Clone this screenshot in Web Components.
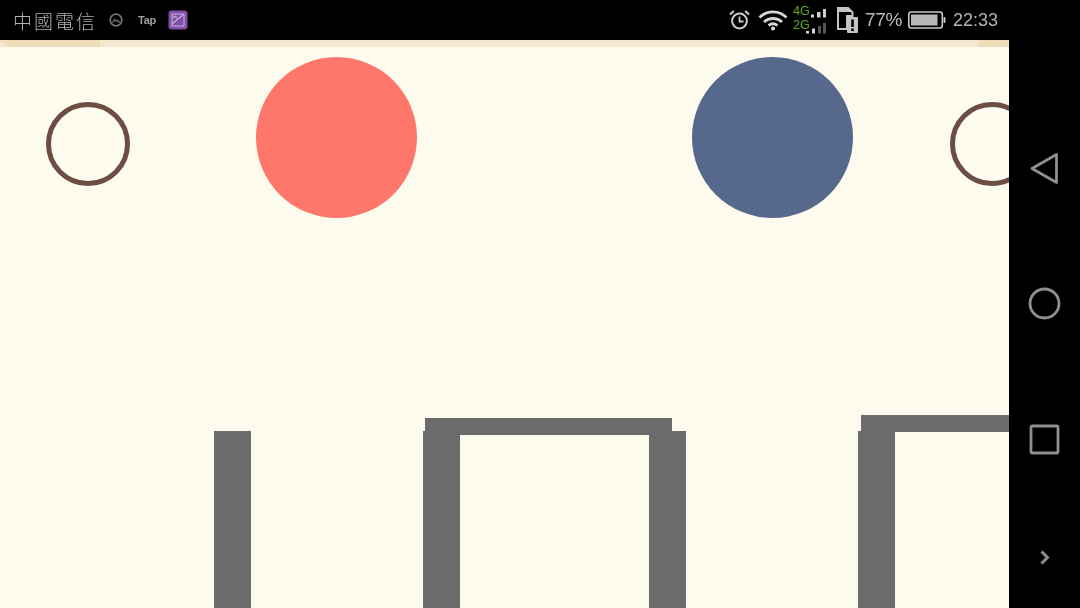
<!DOCTYPE html>
<html><head><meta charset="utf-8"><style>
html,body{margin:0;padding:0;background:#000;overflow:hidden}
body{width:1080px;height:608px}
</style></head><body>
<phone-screen>
  <status-bar slot="status"></status-bar>
  <game-canvas slot="game"></game-canvas>
  <nav-bar slot="nav"></nav-bar>
</phone-screen>
<script>
function def(name, css, html){
  customElements.define(name, class extends HTMLElement{
    constructor(){super();this.attachShadow({mode:'open'}).innerHTML='<style>'+css+'</style>'+html;}
  });
}
def('phone-screen',`
:host{display:grid;grid-template-columns:1009px 71px;grid-template-rows:40px 568px;width:1080px;height:608px;background:#000}
::slotted([slot=status]){grid-column:1;grid-row:1}
::slotted([slot=game]){grid-column:1;grid-row:2}
::slotted([slot=nav]){grid-column:2;grid-row:1 / 3}
`,`<slot name="status"></slot><slot name="game"></slot><slot name="nav"></slot>`);

def('status-bar',`
:host{display:flex;align-items:center;justify-content:space-between;height:40px;background:#000;color:#c8c8c8;font-family:"Liberation Sans",sans-serif;padding:0 10px 0 13px;box-sizing:border-box}
.l,.r{display:flex;align-items:center;flex:none}
.l>*,.r>*{flex:none}
.carrier{font:300 19px/40px "Noto Sans CJK TC","Noto Sans CJK SC",sans-serif;letter-spacing:2px;color:#b4b4b4;width:96px;margin-top:1px;opacity:.99}
.tap{font:700 11px/1 "Liberation Sans",sans-serif;color:#a0a0a0;width:20px;text-align:center;margin:0 11px 0 13px;letter-spacing:-.3px;filter:blur(.5px)}
.pct{font-size:19px;color:#bdbdbd;margin-left:5px;width:37px;letter-spacing:-.3px;white-space:nowrap;opacity:.99}
.time{font-size:18px;color:#b8b8b8;margin-left:7px;width:46px;white-space:nowrap;opacity:.99}
svg{display:block}
`,`
<div class="l">
  <span class="carrier">中國電信</span>
  <svg width="16" height="16" viewBox="0 0 16 16" style="margin-left:-1px" fill="none" stroke="#6e6e6e"><circle cx="8" cy="8" r="5.800" stroke-width="1.800"/><path d="M4.500 10.500 7 7.500 9 9.500 10 8.500l2 2" stroke-width="1.200"/></svg>
  <span class="tap">Tap</span>
  <svg width="20" height="20" viewBox="0 0 20 20"><rect x=".500" y=".500" width="19" height="19" rx="3" fill="#7e4fa8"/><rect x="4" y="4" width="12" height="12" fill="none" stroke="#c9b3da" stroke-width="1"/><path d="M4 14 15.500 4.500M5 8l2-2 2 2" fill="none" stroke="#c9b3da" stroke-width="1.200"/></svg>
</div>
<div class="r">
  <svg width="22" height="22" viewBox="0 0 22 22" fill="none" stroke="#cacaca"><circle cx="11.500" cy="12" r="7.400" stroke-width="2"/><path d="M11.500 7.500V12.500H15.500" stroke-width="1.800"/><path d="M2 5.500 5.800 2M21 5.500 17.200 2" stroke-width="2.200"/></svg>
  <svg style="margin-left:8px" width="30" height="22" viewBox="0 0 30 22" fill="none" stroke="#d6d6d6" stroke-width="2.800"><path d="M1.500 8.500C9 1 21 1 28.500 8.500"/><path d="M6 13c5-4.700 13-4.700 18 0"/><path d="M10.500 16.500c2.800-2.200 6.200-2.200 9 0"/><circle cx="15" cy="19.500" r="2" fill="#e0e0e0" stroke="none"/></svg>
  <svg style="margin-left:5px" width="34" height="32" viewBox="0 0 34 32"><text x="0" y="10.500" font-family="Liberation Sans" font-size="12.500" fill="#5fa22c">4G</text><text x="0" y="25" font-family="Liberation Sans" font-size="12.500" fill="#5fa22c">2G</text>
    <g fill="#cfcfcf"><rect x="18" y="10.500" width="3" height="3"/><rect x="24" y="8" width="3.500" height="5.500"/><rect x="30" y="5" width="3" height="8.500"/><rect x="13" y="27" width="3" height="2.500"/><rect x="19" y="24.500" width="3" height="5"/></g>
    <g fill="#555"><rect x="25" y="22" width="3" height="7.500"/><rect x="30" y="19" width="3" height="10.500"/></g></svg>
  <svg style="margin-left:9px" width="24" height="28" viewBox="0 0 24 28"><path d="M2 2H12L16.500 6.500V10H11V23H2Z" fill="none" stroke="#c4c4c4" stroke-width="2"/><path d="M1 1H12L17 6H1Z" fill="#c4c4c4"/><rect x="11" y="11" width="11" height="16" rx="1" fill="#c4c4c4"/><rect x="15.200" y="13.500" width="2.600" height="7.500" fill="#000"/><rect x="15.200" y="22.500" width="2.600" height="2.600" fill="#000"/></svg>
  <span class="pct">77%</span>
  <svg style="margin-left:5px" width="39" height="20" viewBox="0 0 39 20"><rect x="1.800" y="2" width="33.500" height="16" rx="2.500" fill="none" stroke="#c8c8c8" stroke-width="1.600"/><rect x="4" y="4.500" width="26.500" height="11" fill="#b8b8b8"/><rect x="36.500" y="7" width="2" height="6" rx="1" fill="#c8c8c8"/></svg>
  <span class="time">22:33</span>
</div>`);

def('game-canvas',`
:host{display:block;position:relative;width:1009px;height:568px;background:#fdfaee;overflow:hidden}
.top{position:absolute;left:0;top:0;width:1009px;height:7px;background:#f5e7cf}
.a{position:absolute;top:0;height:7px;background:#efdcb9}
.corner{left:0;width:100px;clip-path:polygon(0 0,100% 0,100% 100%,8px 100%)}
.end{left:979px;width:30px}
.disc{position:absolute;border-radius:50%;box-sizing:border-box}
.bar{position:absolute;background:#6b6b6b}
`,`
<div class="top"></div><div class="a corner"></div><div class="a end"></div>
<div class="disc" style="left:46px;top:62px;width:84px;height:84px;border:5px solid #6c4d41"></div>
<div class="disc" style="left:950px;top:62px;width:84px;height:84px;border:5px solid #6c4d41"></div>
<div class="disc" style="left:256px;top:17px;width:161px;height:161px;background:#ff776b"></div>
<div class="disc" style="left:692px;top:17px;width:161px;height:161px;background:#56698c"></div>
<div class="bar" style="left:214px;top:391px;width:37px;height:177px"></div>
<div class="bar" style="left:423px;top:391px;width:37px;height:177px"></div>
<div class="bar" style="left:649px;top:391px;width:37px;height:177px"></div>
<div class="bar" style="left:425px;top:378px;width:247px;height:17px"></div>
<div class="bar" style="left:858px;top:391px;width:37px;height:177px"></div>
<div class="bar" style="left:861px;top:375px;width:148px;height:17px"></div>
`);

def('nav-bar',`
:host{display:block;position:relative;width:71px;height:608px;background:#000}
svg{position:absolute;left:0;top:0}
`,`
<svg width="71" height="608" viewBox="0 0 71 608" fill="none" stroke="#8f8f8f" stroke-width="2.800" stroke-linejoin="round" stroke-linecap="round">
  <path d="M23 168.500 47.500 154.500V182.500Z"/>
  <circle cx="35.500" cy="303.500" r="14.500"/>
  <rect x="22" y="426" width="27" height="27" rx="1.500"/>
  <path d="M32.500 551.500 38.500 557.500 32.500 563.500" stroke-width="3" stroke="#8c8c8c" stroke-linecap="butt" stroke-linejoin="miter"/>
</svg>`);
</script>
</body></html>
